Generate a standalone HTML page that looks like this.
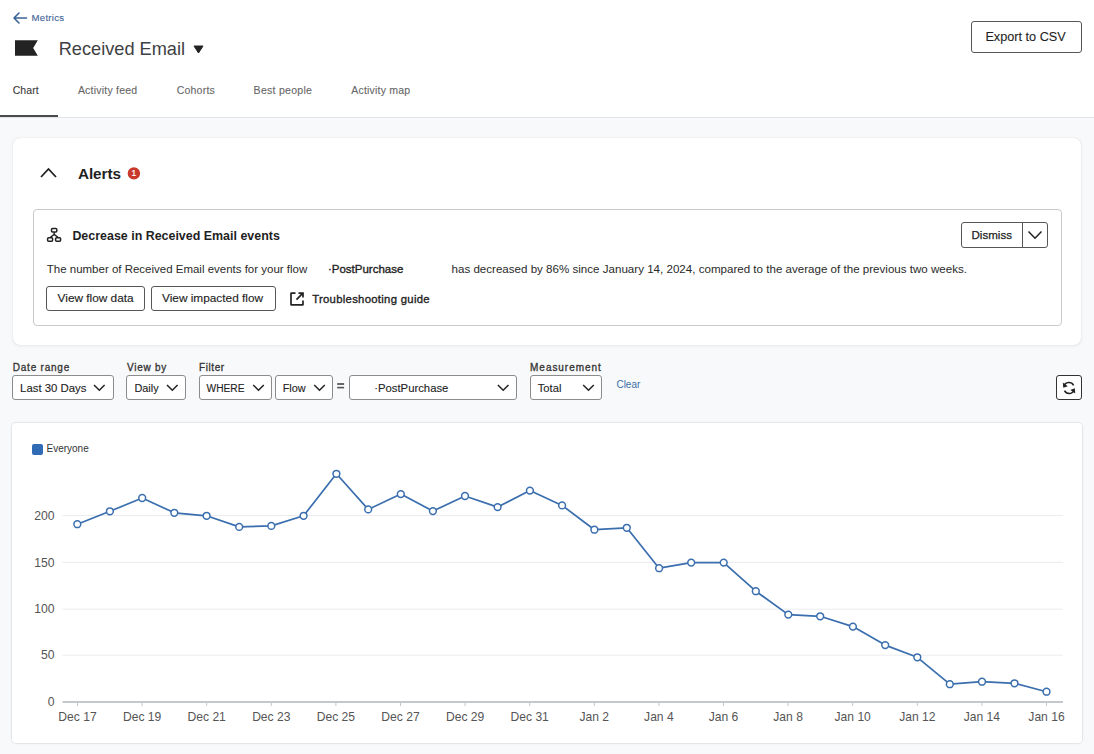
<!DOCTYPE html>
<html><head><meta charset="utf-8"><style>
html,body{margin:0;padding:0;width:1094px;height:754px;overflow:hidden;background:#fff;font-family:"Liberation Sans", sans-serif;}
.t{position:absolute;line-height:1;white-space:nowrap;}
</style></head><body>
<div style="position:absolute;left:0px;top:0px;width:1094px;height:118px;box-sizing:border-box;background:#fff;"></div><div style="position:absolute;left:0px;top:117px;width:1094px;height:1px;box-sizing:border-box;background:#e1e3e8;"></div><div style="position:absolute;left:0px;top:115px;width:58px;height:2px;box-sizing:border-box;background:#4b4b4b;"></div><svg style="position:absolute;left:0;top:0" width="40" height="30"><path d="M26.5 18 H14 M19 13 L14 18 L19 23" fill="none" stroke="#3a6396" stroke-width="1.6" stroke-linecap="round" stroke-linejoin="round"/></svg><div class="t" style="left:31.60px;top:13.27px;font-size:9.6px;font-weight:400;color:#3f6698;letter-spacing:0.25px;-webkit-text-stroke:0.12px #3f6698;">Metrics</div><svg style="position:absolute;left:0;top:0" width="60" height="70"><path d="M15 40.2 H37.8 L33.2 48 L37.8 55.8 H15 Z" fill="#232323"/></svg><div class="t" style="left:58.70px;top:39.89px;font-size:18.2px;font-weight:400;color:#404143;letter-spacing:0px;">Received Email</div><svg style="position:absolute;left:0;top:0" width="220" height="70"><path d="M194 46 H203 L198.5 53 Z" fill="#222" stroke="#222" stroke-width="1" stroke-linejoin="round"/></svg><div class="t" style="left:12.70px;top:85.26px;font-size:10.5px;font-weight:400;color:#3a3a3a;letter-spacing:0.08px;-webkit-text-stroke:0.1px #3a3a3a;">Chart</div><div class="t" style="left:77.90px;top:85.26px;font-size:10.5px;font-weight:400;color:#666;letter-spacing:0.22px;-webkit-text-stroke:0.1px #666;">Activity feed</div><div class="t" style="left:176.70px;top:85.26px;font-size:10.5px;font-weight:400;color:#666;letter-spacing:0.22px;-webkit-text-stroke:0.1px #666;">Cohorts</div><div class="t" style="left:253.60px;top:85.26px;font-size:10.5px;font-weight:400;color:#666;letter-spacing:0.28px;-webkit-text-stroke:0.1px #666;">Best people</div><div class="t" style="left:351.20px;top:85.26px;font-size:10.5px;font-weight:400;color:#666;letter-spacing:0.22px;-webkit-text-stroke:0.1px #666;">Activity map</div><div style="position:absolute;left:971px;top:21px;width:111px;height:32px;box-sizing:border-box;border:1px solid #575757;border-radius:3px;background:#fff;"></div><div class="t" style="left:985.40px;top:30.65px;font-size:12.7px;font-weight:400;color:#1f1f1f;letter-spacing:0px;-webkit-text-stroke:0.1px #1f1f1f;">Export to CSV</div><div style="position:absolute;left:0px;top:118px;width:1094px;height:636px;box-sizing:border-box;background:#f8f9fa;"></div><div style="position:absolute;left:13px;top:138px;width:1068px;height:207px;box-sizing:border-box;background:#fff;border-radius:7px;box-shadow:0 0 1px rgba(0,0,0,0.18), 0 1px 4px rgba(0,0,0,0.06);"></div><svg style="position:absolute;left:0;top:0" width="80" height="200"><path d="M41 177 L48.5 169 L56 177" fill="none" stroke="#222" stroke-width="1.8"/></svg><div class="t" style="left:77.90px;top:166.45px;font-size:15.3px;font-weight:700;color:#1f1f1f;letter-spacing:-0.05px;">Alerts</div><svg style="position:absolute;left:0;top:0" width="160" height="200"><circle cx="133.9" cy="173.4" r="6.2" fill="#c9392b"/></svg><div class="t" style="left:-66.10px;width:400px;text-align:center;top:169.10px;font-size:8.5px;font-weight:400;color:#fff;letter-spacing:0px;-webkit-text-stroke:0.2px #fff;">1</div><div style="position:absolute;left:33px;top:209px;width:1029px;height:117px;box-sizing:border-box;border:1px solid #c9cacc;border-radius:4px;"></div><svg style="position:absolute;left:0;top:0" width="70" height="250"><g fill="none" stroke="#222" stroke-width="1.5"><rect x="51.5" y="228.6" width="5.3" height="3.5" rx="1"/><rect x="47.6" y="237.8" width="5" height="3.4" rx="1"/><rect x="55.6" y="237.8" width="5" height="3.4" rx="1"/><path d="M54.2 232.2 V234.5 M50.2 237.5 L54.2 234.5 L58.2 237.5"/></g></svg><div class="t" style="left:72.40px;top:229.56px;font-size:12.45px;font-weight:700;color:#1f1f1f;letter-spacing:0px;">Decrease in Received Email events</div><div class="t" style="left:46.80px;top:263.97px;font-size:11.49px;font-weight:400;color:#2a2a2a;letter-spacing:0px;">The number of Received Email events for your flow</div><div class="t" style="left:327.90px;top:263.97px;font-size:11.5px;font-weight:400;color:#1f1f1f;letter-spacing:0px;-webkit-text-stroke:0.35px #1f1f1f;">&middot;PostPurchase</div><div class="t" style="left:451.50px;top:263.90px;font-size:11.58px;font-weight:400;color:#2a2a2a;letter-spacing:0px;">has decreased by 86% since January 14, 2024, compared to the average of the previous two weeks.</div><div style="position:absolute;left:46px;top:286px;width:99px;height:25px;box-sizing:border-box;border:1px solid #575757;border-radius:3px;"></div><div class="t" style="left:57.60px;top:292.98px;font-size:11.84px;font-weight:400;color:#1f1f1f;letter-spacing:0px;-webkit-text-stroke:0.15px #1f1f1f;">View flow data</div><div style="position:absolute;left:151px;top:286px;width:125px;height:25px;box-sizing:border-box;border:1px solid #575757;border-radius:3px;"></div><div class="t" style="left:162.00px;top:292.98px;font-size:11.84px;font-weight:400;color:#1f1f1f;letter-spacing:0px;-webkit-text-stroke:0.15px #1f1f1f;">View impacted flow</div><svg style="position:absolute;left:0;top:0" width="320" height="320"><g fill="none" stroke="#222" stroke-width="1.7"><path d="M295.5 293.1 H291.4 Q291 293.1 291 293.5 V304.4 Q291 304.8 291.4 304.8 H302.6 Q303 304.8 303 304.4 V300.5"/><path d="M296.5 299.7 L302.6 293.4 M298.5 293.1 H303 V297.5"/></g></svg><div class="t" style="left:312.20px;top:294.33px;font-size:11.3px;font-weight:400;color:#1f1f1f;letter-spacing:0.3px;-webkit-text-stroke:0.35px #1f1f1f;">Troubleshooting guide</div><div style="position:absolute;left:961px;top:222px;width:87px;height:26px;box-sizing:border-box;border:1px solid #575757;border-radius:3px;"></div><div style="position:absolute;left:1022px;top:222px;width:1px;height:26px;box-sizing:border-box;background:#575757;"></div><div class="t" style="left:971.50px;top:229.51px;font-size:11.57px;font-weight:400;color:#1f1f1f;letter-spacing:0px;-webkit-text-stroke:0.25px #1f1f1f;">Dismiss</div><svg style="position:absolute;left:0;top:0" width="1094" height="260"><path d="M1028.5 231.5 L1035 238.2 L1041.5 231.5" fill="none" stroke="#222" stroke-width="1.5"/></svg><div class="t" style="left:12.80px;top:363.14px;font-size:10.0px;font-weight:400;color:#333;letter-spacing:0.77px;-webkit-text-stroke:0.3px #333;">Date range</div><div class="t" style="left:127.00px;top:363.14px;font-size:10.0px;font-weight:400;color:#333;letter-spacing:0.74px;-webkit-text-stroke:0.3px #333;">View by</div><div class="t" style="left:199.10px;top:363.14px;font-size:10.0px;font-weight:400;color:#333;letter-spacing:0.57px;-webkit-text-stroke:0.3px #333;">Filter</div><div class="t" style="left:530.10px;top:363.14px;font-size:10.0px;font-weight:400;color:#333;letter-spacing:0.95px;-webkit-text-stroke:0.3px #333;">Measurement</div><div style="position:absolute;left:12px;top:375px;width:102px;height:25px;box-sizing:border-box;background:#fff;border:1px solid #8c8c8c;border-radius:3px;"></div><div class="t" style="left:20.10px;top:383.17px;font-size:11.38px;font-weight:400;color:#222;letter-spacing:0px;-webkit-text-stroke:0.1px #222;">Last 30 Days</div><svg style="position:absolute;left:0;top:0" width="1094" height="420"><path d="M94.0 385 L99.3 390.3 L104.6 385" fill="none" stroke="#222" stroke-width="1.5"/></svg><div style="position:absolute;left:126px;top:375px;width:60px;height:25px;box-sizing:border-box;background:#fff;border:1px solid #8c8c8c;border-radius:3px;"></div><div class="t" style="left:134.40px;top:382.95px;font-size:10.93px;font-weight:400;color:#222;letter-spacing:0px;-webkit-text-stroke:0.1px #222;">Daily</div><svg style="position:absolute;left:0;top:0" width="1094" height="420"><path d="M167.0 385 L172.3 390.3 L177.6 385" fill="none" stroke="#222" stroke-width="1.5"/></svg><div style="position:absolute;left:199px;top:375px;width:73px;height:25px;box-sizing:border-box;background:#fff;border:1px solid #8c8c8c;border-radius:3px;"></div><div class="t" style="left:206.50px;top:384.16px;font-size:10.21px;font-weight:400;color:#222;letter-spacing:0px;-webkit-text-stroke:0.1px #222;">WHERE</div><svg style="position:absolute;left:0;top:0" width="1094" height="420"><path d="M253.2 385 L258.5 390.3 L263.8 385" fill="none" stroke="#222" stroke-width="1.5"/></svg><div style="position:absolute;left:275px;top:375px;width:58px;height:25px;box-sizing:border-box;background:#fff;border:1px solid #8c8c8c;border-radius:3px;"></div><div class="t" style="left:282.70px;top:382.98px;font-size:10.89px;font-weight:400;color:#222;letter-spacing:0px;-webkit-text-stroke:0.1px #222;">Flow</div><svg style="position:absolute;left:0;top:0" width="1094" height="420"><path d="M314.2 385 L319.5 390.3 L324.8 385" fill="none" stroke="#222" stroke-width="1.5"/></svg><svg style="position:absolute;left:0;top:0" width="400" height="400"><rect x="337.2" y="383.2" width="6.9" height="1.6" fill="#444"/><rect x="337.2" y="386.8" width="6.9" height="1.6" fill="#555"/></svg><div style="position:absolute;left:349px;top:375px;width:168px;height:25px;box-sizing:border-box;background:#fff;border:1px solid #8c8c8c;border-radius:3px;"></div><div class="t" style="left:374.20px;top:383.22px;font-size:11.32px;font-weight:400;color:#222;letter-spacing:0px;-webkit-text-stroke:0.1px #222;">&middot;PostPurchase</div><svg style="position:absolute;left:0;top:0" width="1094" height="420"><path d="M497.9 385 L503.2 390.3 L508.5 385" fill="none" stroke="#222" stroke-width="1.5"/></svg><div style="position:absolute;left:530px;top:375px;width:72px;height:25px;box-sizing:border-box;background:#fff;border:1px solid #8c8c8c;border-radius:3px;"></div><div class="t" style="left:537.70px;top:383.30px;font-size:11.22px;font-weight:400;color:#222;letter-spacing:0px;-webkit-text-stroke:0.1px #222;">Total</div><svg style="position:absolute;left:0;top:0" width="1094" height="420"><path d="M583.2 385 L588.5 390.3 L593.8 385" fill="none" stroke="#222" stroke-width="1.5"/></svg><div class="t" style="left:616.40px;top:379.50px;font-size:10.04px;font-weight:400;color:#3d6ea8;letter-spacing:0px;">Clear</div><div style="position:absolute;left:1056px;top:375px;width:26px;height:25px;box-sizing:border-box;background:#fff;border:1.5px solid #333;border-radius:3px;"></div><svg style="position:absolute;left:0;top:0" width="1094" height="420"><g fill="none" stroke="#222" stroke-width="1.5"><path d="M1063.8 386.2 A5.3 5.3 0 0 1 1073.6 385.3"/><path d="M1074.3 389.6 A5.3 5.3 0 0 1 1064.5 390.6"/></g><path d="M1062.8 382.6 L1063.3 387.8 L1067.8 386.2 Z" fill="#222"/><path d="M1075.3 393.6 L1074.8 388.2 L1070.3 390 Z" fill="#222"/></svg><div style="position:absolute;left:12px;top:422.5px;width:1070px;height:320.0px;box-sizing:border-box;background:#fff;border-radius:4px;box-shadow:0 0 0 1px rgba(0,0,0,0.055), 0 0 4px rgba(0,0,0,0.05);"></div><div style="position:absolute;left:32.2px;top:444.2px;width:10.5px;height:10.400000000000034px;box-sizing:border-box;background:#2f6cb5;border-radius:2px;"></div><div class="t" style="left:46.50px;top:444.24px;font-size:10.0px;font-weight:400;color:#333;letter-spacing:0px;">Everyone</div><svg style="position:absolute;left:0;top:0" width="1094" height="754"><line x1="62.5" y1="515.5" x2="1063" y2="515.5" stroke="#ebecef" stroke-width="1"/><line x1="62.5" y1="562.3" x2="1063" y2="562.3" stroke="#ebecef" stroke-width="1"/><line x1="62.5" y1="609.2" x2="1063" y2="609.2" stroke="#ebecef" stroke-width="1"/><line x1="62.5" y1="655.2" x2="1063" y2="655.2" stroke="#ebecef" stroke-width="1"/><line x1="62.5" y1="702" x2="1063" y2="702" stroke="#c4c7cd" stroke-width="2"/><line x1="77.5" y1="702" x2="77.5" y2="706" stroke="#c4c7cd" stroke-width="1"/><line x1="142.1" y1="702" x2="142.1" y2="706" stroke="#c4c7cd" stroke-width="1"/><line x1="206.7" y1="702" x2="206.7" y2="706" stroke="#c4c7cd" stroke-width="1"/><line x1="271.3" y1="702" x2="271.3" y2="706" stroke="#c4c7cd" stroke-width="1"/><line x1="335.9" y1="702" x2="335.9" y2="706" stroke="#c4c7cd" stroke-width="1"/><line x1="400.5" y1="702" x2="400.5" y2="706" stroke="#c4c7cd" stroke-width="1"/><line x1="465.1" y1="702" x2="465.1" y2="706" stroke="#c4c7cd" stroke-width="1"/><line x1="529.7" y1="702" x2="529.7" y2="706" stroke="#c4c7cd" stroke-width="1"/><line x1="594.3" y1="702" x2="594.3" y2="706" stroke="#c4c7cd" stroke-width="1"/><line x1="658.9" y1="702" x2="658.9" y2="706" stroke="#c4c7cd" stroke-width="1"/><line x1="723.5" y1="702" x2="723.5" y2="706" stroke="#c4c7cd" stroke-width="1"/><line x1="788.1" y1="702" x2="788.1" y2="706" stroke="#c4c7cd" stroke-width="1"/><line x1="852.7" y1="702" x2="852.7" y2="706" stroke="#c4c7cd" stroke-width="1"/><line x1="917.3" y1="702" x2="917.3" y2="706" stroke="#c4c7cd" stroke-width="1"/><line x1="981.9" y1="702" x2="981.9" y2="706" stroke="#c4c7cd" stroke-width="1"/><line x1="1046.5" y1="702" x2="1046.5" y2="706" stroke="#c4c7cd" stroke-width="1"/><polyline points="77.3,524.2 109.9,511.3 142.2,498 174.3,512.8 206.6,515.8 239.2,526.9 271.3,525.9 303.6,515.8 336.4,473.8 368.2,509.4 400.8,494.1 432.9,511.1 465,496 497.6,507.1 529.9,490.6 562.1,505.4 594.4,529.7 626.8,527.8 659.1,568.2 691.2,562.6 723.7,562.6 755.8,591.2 788.3,614.6 820.2,616.3 852.9,626.6 885.2,645.1 917.3,657.3 949.8,684.2 982,681.7 1014.5,683.3 1046.5,691.7" fill="none" stroke="#3a6eae" stroke-width="1.7" stroke-linejoin="round"/><circle cx="77.3" cy="524.2" r="3.4" fill="#fff" stroke="#3a6eae" stroke-width="1.5"/><circle cx="109.9" cy="511.3" r="3.4" fill="#fff" stroke="#3a6eae" stroke-width="1.5"/><circle cx="142.2" cy="498" r="3.4" fill="#fff" stroke="#3a6eae" stroke-width="1.5"/><circle cx="174.3" cy="512.8" r="3.4" fill="#fff" stroke="#3a6eae" stroke-width="1.5"/><circle cx="206.6" cy="515.8" r="3.4" fill="#fff" stroke="#3a6eae" stroke-width="1.5"/><circle cx="239.2" cy="526.9" r="3.4" fill="#fff" stroke="#3a6eae" stroke-width="1.5"/><circle cx="271.3" cy="525.9" r="3.4" fill="#fff" stroke="#3a6eae" stroke-width="1.5"/><circle cx="303.6" cy="515.8" r="3.4" fill="#fff" stroke="#3a6eae" stroke-width="1.5"/><circle cx="336.4" cy="473.8" r="3.4" fill="#fff" stroke="#3a6eae" stroke-width="1.5"/><circle cx="368.2" cy="509.4" r="3.4" fill="#fff" stroke="#3a6eae" stroke-width="1.5"/><circle cx="400.8" cy="494.1" r="3.4" fill="#fff" stroke="#3a6eae" stroke-width="1.5"/><circle cx="432.9" cy="511.1" r="3.4" fill="#fff" stroke="#3a6eae" stroke-width="1.5"/><circle cx="465" cy="496" r="3.4" fill="#fff" stroke="#3a6eae" stroke-width="1.5"/><circle cx="497.6" cy="507.1" r="3.4" fill="#fff" stroke="#3a6eae" stroke-width="1.5"/><circle cx="529.9" cy="490.6" r="3.4" fill="#fff" stroke="#3a6eae" stroke-width="1.5"/><circle cx="562.1" cy="505.4" r="3.4" fill="#fff" stroke="#3a6eae" stroke-width="1.5"/><circle cx="594.4" cy="529.7" r="3.4" fill="#fff" stroke="#3a6eae" stroke-width="1.5"/><circle cx="626.8" cy="527.8" r="3.4" fill="#fff" stroke="#3a6eae" stroke-width="1.5"/><circle cx="659.1" cy="568.2" r="3.4" fill="#fff" stroke="#3a6eae" stroke-width="1.5"/><circle cx="691.2" cy="562.6" r="3.4" fill="#fff" stroke="#3a6eae" stroke-width="1.5"/><circle cx="723.7" cy="562.6" r="3.4" fill="#fff" stroke="#3a6eae" stroke-width="1.5"/><circle cx="755.8" cy="591.2" r="3.4" fill="#fff" stroke="#3a6eae" stroke-width="1.5"/><circle cx="788.3" cy="614.6" r="3.4" fill="#fff" stroke="#3a6eae" stroke-width="1.5"/><circle cx="820.2" cy="616.3" r="3.4" fill="#fff" stroke="#3a6eae" stroke-width="1.5"/><circle cx="852.9" cy="626.6" r="3.4" fill="#fff" stroke="#3a6eae" stroke-width="1.5"/><circle cx="885.2" cy="645.1" r="3.4" fill="#fff" stroke="#3a6eae" stroke-width="1.5"/><circle cx="917.3" cy="657.3" r="3.4" fill="#fff" stroke="#3a6eae" stroke-width="1.5"/><circle cx="949.8" cy="684.2" r="3.4" fill="#fff" stroke="#3a6eae" stroke-width="1.5"/><circle cx="982" cy="681.7" r="3.4" fill="#fff" stroke="#3a6eae" stroke-width="1.5"/><circle cx="1014.5" cy="683.3" r="3.4" fill="#fff" stroke="#3a6eae" stroke-width="1.5"/><circle cx="1046.5" cy="691.7" r="3.4" fill="#fff" stroke="#3a6eae" stroke-width="1.5"/></svg><div class="t" style="right:1039.50px;top:509.77px;font-size:12.2px;font-weight:400;color:#555;letter-spacing:0px;">200</div><div class="t" style="right:1039.50px;top:556.57px;font-size:12.2px;font-weight:400;color:#555;letter-spacing:0px;">150</div><div class="t" style="right:1039.50px;top:603.47px;font-size:12.2px;font-weight:400;color:#555;letter-spacing:0px;">100</div><div class="t" style="right:1039.50px;top:649.47px;font-size:12.2px;font-weight:400;color:#555;letter-spacing:0px;">50</div><div class="t" style="right:1039.50px;top:696.27px;font-size:12.2px;font-weight:400;color:#555;letter-spacing:0px;">0</div><div class="t" style="left:-122.50px;width:400px;text-align:center;top:710.76px;font-size:12.1px;font-weight:400;color:#555;letter-spacing:0px;">Dec 17</div><div class="t" style="left:-57.90px;width:400px;text-align:center;top:710.76px;font-size:12.1px;font-weight:400;color:#555;letter-spacing:0px;">Dec 19</div><div class="t" style="left:6.70px;width:400px;text-align:center;top:710.76px;font-size:12.1px;font-weight:400;color:#555;letter-spacing:0px;">Dec 21</div><div class="t" style="left:71.30px;width:400px;text-align:center;top:710.76px;font-size:12.1px;font-weight:400;color:#555;letter-spacing:0px;">Dec 23</div><div class="t" style="left:135.90px;width:400px;text-align:center;top:710.76px;font-size:12.1px;font-weight:400;color:#555;letter-spacing:0px;">Dec 25</div><div class="t" style="left:200.50px;width:400px;text-align:center;top:710.76px;font-size:12.1px;font-weight:400;color:#555;letter-spacing:0px;">Dec 27</div><div class="t" style="left:265.10px;width:400px;text-align:center;top:710.76px;font-size:12.1px;font-weight:400;color:#555;letter-spacing:0px;">Dec 29</div><div class="t" style="left:329.70px;width:400px;text-align:center;top:710.76px;font-size:12.1px;font-weight:400;color:#555;letter-spacing:0px;">Dec 31</div><div class="t" style="left:394.30px;width:400px;text-align:center;top:710.76px;font-size:12.1px;font-weight:400;color:#555;letter-spacing:0px;">Jan 2</div><div class="t" style="left:458.90px;width:400px;text-align:center;top:710.76px;font-size:12.1px;font-weight:400;color:#555;letter-spacing:0px;">Jan 4</div><div class="t" style="left:523.50px;width:400px;text-align:center;top:710.76px;font-size:12.1px;font-weight:400;color:#555;letter-spacing:0px;">Jan 6</div><div class="t" style="left:588.10px;width:400px;text-align:center;top:710.76px;font-size:12.1px;font-weight:400;color:#555;letter-spacing:0px;">Jan 8</div><div class="t" style="left:652.70px;width:400px;text-align:center;top:710.76px;font-size:12.1px;font-weight:400;color:#555;letter-spacing:0px;">Jan 10</div><div class="t" style="left:717.30px;width:400px;text-align:center;top:710.76px;font-size:12.1px;font-weight:400;color:#555;letter-spacing:0px;">Jan 12</div><div class="t" style="left:781.90px;width:400px;text-align:center;top:710.76px;font-size:12.1px;font-weight:400;color:#555;letter-spacing:0px;">Jan 14</div><div class="t" style="left:846.50px;width:400px;text-align:center;top:710.76px;font-size:12.1px;font-weight:400;color:#555;letter-spacing:0px;">Jan 16</div>
</body></html>
